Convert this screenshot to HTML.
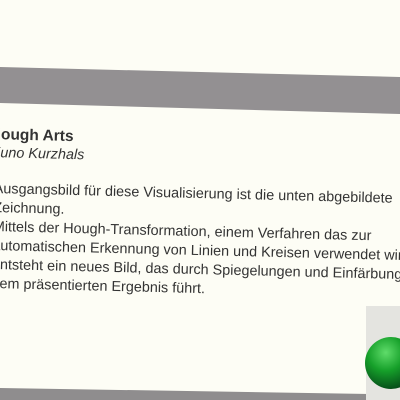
<!DOCTYPE html>
<html><head><style>
body{margin:0;width:400px;height:400px;overflow:hidden;background:#fdfdf5;position:relative;font-family:"Liberation Sans",sans-serif;color:#333}
.t{position:absolute;left:-8px;top:0;transform-origin:0 0;transform:rotate(1.4deg);white-space:nowrap;font-size:14.4px;line-height:19px}
</style></head><body>
<svg width="400" height="400" style="position:absolute;left:0;top:0">
<polygon points="0,67 400,77 400,114 0,103" fill="#939092"/>
<polygon points="0,388 370,394 370,400 0,400" fill="#8f8d8e"/>
<rect x="366" y="306" width="34" height="94" fill="#e4e4e0"/>
<defs><radialGradient id="g" cx="0.4" cy="0.3" r="0.7"><stop offset="0" stop-color="#5fdc6a"/><stop offset="0.5" stop-color="#16a02a"/><stop offset="1" stop-color="#06501a"/></radialGradient></defs>
<circle cx="391" cy="363" r="26" fill="url(#g)"/>
</svg>
<div class="t" style="top:125px;left:-10px"><b style="font-size:15.5px">Hough Arts</b></div>
<div class="t" style="top:144px;left:-9px"><i>Kuno Kurzhals</i></div>
<div class="t" style="top:180px;left:-6px">Ausgangsbild für diese Visualisierung ist die unten abgebildete<br>Zeichnung.<br>Mittels der Hough-Transformation, einem Verfahren das zur<br>automatischen Erkennung von Linien und Kreisen verwendet wird,<br>entsteht ein neues Bild, das durch Spiegelungen und Einfärbungen zu<br>dem präsentierten Ergebnis führt.</div>
</body></html>
